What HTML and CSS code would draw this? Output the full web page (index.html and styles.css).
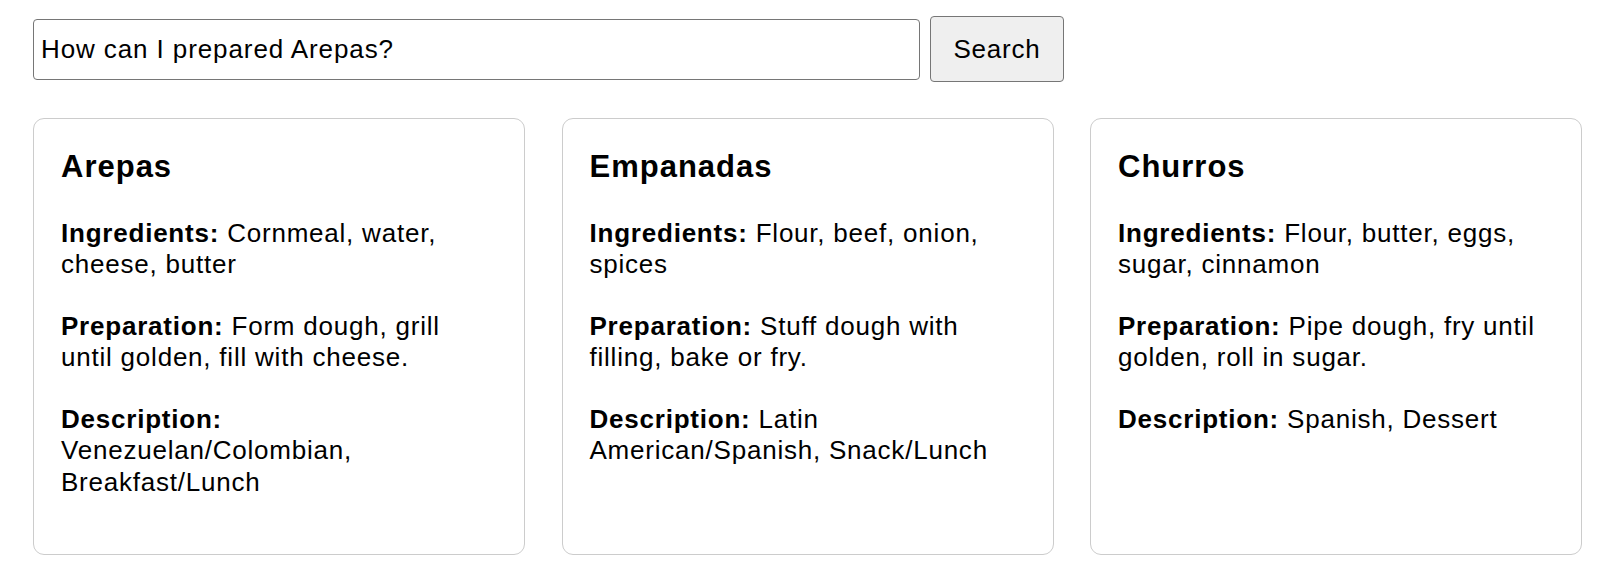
FILE: index.html
```html
<!DOCTYPE html>
<html>
<head>
<meta charset="utf-8">
<link rel="stylesheet" href="styles.css">
</head>
<body>
<div class="page">
  <form class="search-row">
    <input class="search-input" type="text" value="How can I prepared Arepas?">
    <button class="search-btn" type="button">Search</button>
  </form>
  <div class="cards">
    <div class="card">
      <h3 class="card-title">Arepas</h3>
      <p><strong>Ingredients:</strong> Cornmeal, water, cheese, butter</p>
      <p><strong>Preparation:</strong> Form dough, grill until golden, fill with cheese.</p>
      <p><strong>Description:</strong> Venezuelan/Colombian, Breakfast/Lunch</p>
    </div>
    <div class="card">
      <h3 class="card-title">Empanadas</h3>
      <p><strong>Ingredients:</strong> Flour, beef, onion, spices</p>
      <p><strong>Preparation:</strong> Stuff dough with filling, bake or fry.</p>
      <p><strong>Description:</strong> Latin American/Spanish, Snack/Lunch</p>
    </div>
    <div class="card">
      <h3 class="card-title">Churros</h3>
      <p><strong>Ingredients:</strong> Flour, butter, eggs, sugar, cinnamon</p>
      <p><strong>Preparation:</strong> Pipe dough, fry until golden, roll in sugar.</p>
      <p><strong>Description:</strong> Spanish, Dessert</p>
    </div>
  </div>
</div>
</body>
</html>
```
FILE: styles.css
```css
* { box-sizing: border-box; }
html, body {
  margin: 0;
  padding: 0;
  background: #ffffff;
}
body {
  font-family: "Liberation Sans", Arial, Helvetica, sans-serif;
  color: #000;
}
.page {
  padding: 16px 18px 0 33px;
}
.search-row {
  display: flex;
  align-items: center;
  gap: 10px;
  margin: 0;
  height: 66px;
}
.search-input {
  width: 887px;
  height: 61px;
  border: 1px solid #767676;
  border-radius: 4px;
  padding: 0 7px;
  font-family: "Liberation Sans", Arial, sans-serif;
  font-size: 26px;
  letter-spacing: 0.9px;
  color: #000;
  background: #fff;
  outline: none;
}
.search-btn {
  width: 134px;
  height: 66px;
  border: 1px solid #767676;
  border-radius: 4px;
  background: #efefef;
  font-family: "Liberation Sans", Arial, sans-serif;
  font-size: 26px;
  letter-spacing: 0.8px;
  color: #000;
  padding: 0;
}
.cards {
  display: grid;
  grid-template-columns: repeat(3, 492px);
  column-gap: 36.5px;
  margin-top: 36px;
}
.card {
  border: 1px solid #cccccc;
  border-radius: 11px;
  padding: 30px 26px 26px 27px;
  font-size: 26px;
  letter-spacing: 0.78px;
  line-height: 31.5px;
}
.card-title {
  margin: 0 0 32.5px 0;
  font-size: 31px;
  letter-spacing: 1px;
  line-height: 36px;
  font-weight: bold;
}
.card p {
  margin: 0 0 30px 0;
}
.card strong {
  font-weight: bold;
}
```
